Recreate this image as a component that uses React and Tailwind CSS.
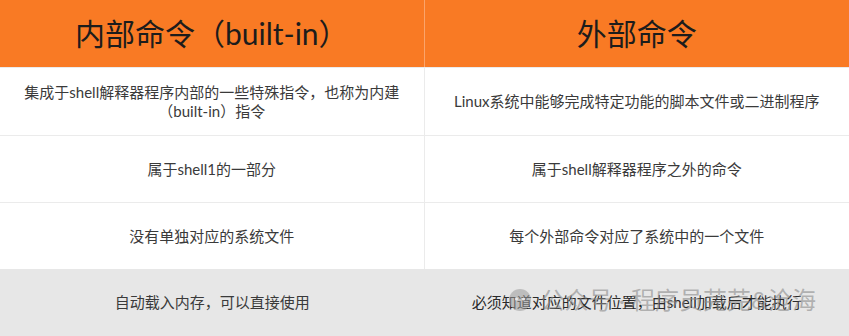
const rows = [
  {
    left: "集成于shell解释器程序内部的一些特殊指令，也称为内建（built-in）指令",
    right: "Linux系统中能够完成特定功能的脚本文件或二进制程序",
    h: "h-[68px]",
  },
  { left: "属于shell1的一部分", right: "属于shell解释器程序之外的命令", h: "h-[67px]" },
  { left: "没有单独对应的系统文件", right: "每个外部命令对应了系统中的一个文件", h: "h-[67px]" },
];

const font = { fontFamily: 'Lato, "Noto Sans CJK SC", sans-serif' };

const App = () => {
  return (
    <div className="w-[849px] h-[336px] bg-white overflow-hidden" style={font}>
      <div className="grid grid-cols-2">
        {/* 表头 */}
        <div className="h-[67px] bg-[#f97a24] border-r border-[#fba46a] flex items-center justify-center text-[30px] text-[#1c1c1c]">
          内部命令（built-in）
        </div>
        <div className="h-[67px] bg-[#f97a24] flex items-center justify-center text-[30px] text-[#1c1c1c]">
          外部命令
        </div>

        {rows.map((r, i) => (
          <div key={i} className="contents">
            <div
              className={`${r.h} border-r border-t border-[#ebebeb] flex items-center justify-center text-center px-6 text-[15px] leading-[19px] text-[#3a3a3a]`}
            >
              <span className="max-w-[380px]">{r.left}</span>
            </div>
            <div
              className={`${r.h} border-t border-[#ebebeb] flex items-center justify-center text-center px-6 text-[15px] leading-[19px] text-[#3a3a3a]`}
            >
              {r.right}
            </div>
          </div>
        ))}

        {/* 最后一行（灰底） */}
        <div className="h-[67px] bg-[#e7e7e7] flex items-center justify-center text-[15px] text-[#3a3a3a]">
          自动载入内存，可以直接使用
        </div>
        <div className="relative h-[67px] bg-[#e7e7e7] flex items-center justify-center text-[15px] text-[#2a2a2a]">
          必须知道对应的文件位置，由shell加载后才能执行
          {/* 水印 */}
          <div className="absolute left-[84px] top-[19px] flex items-center gap-[10px] whitespace-nowrap text-[24px] leading-[24px] text-[#8c8c8c]/60 pointer-events-none">
            <svg width="22" height="22" viewBox="0 0 22 22">
              <circle cx="11" cy="11" r="11" fill="#9a9a9a" fillOpacity="0.55" />
              <circle cx="7.5" cy="10" r="1.5" fill="#e7e7e7" />
              <circle cx="14.5" cy="10" r="1.5" fill="#e7e7e7" />
            </svg>
            <span>公众号 · 程序员芫芫&amp;沧海</span>
          </div>
        </div>
      </div>
    </div>
  );
};

export default App;
